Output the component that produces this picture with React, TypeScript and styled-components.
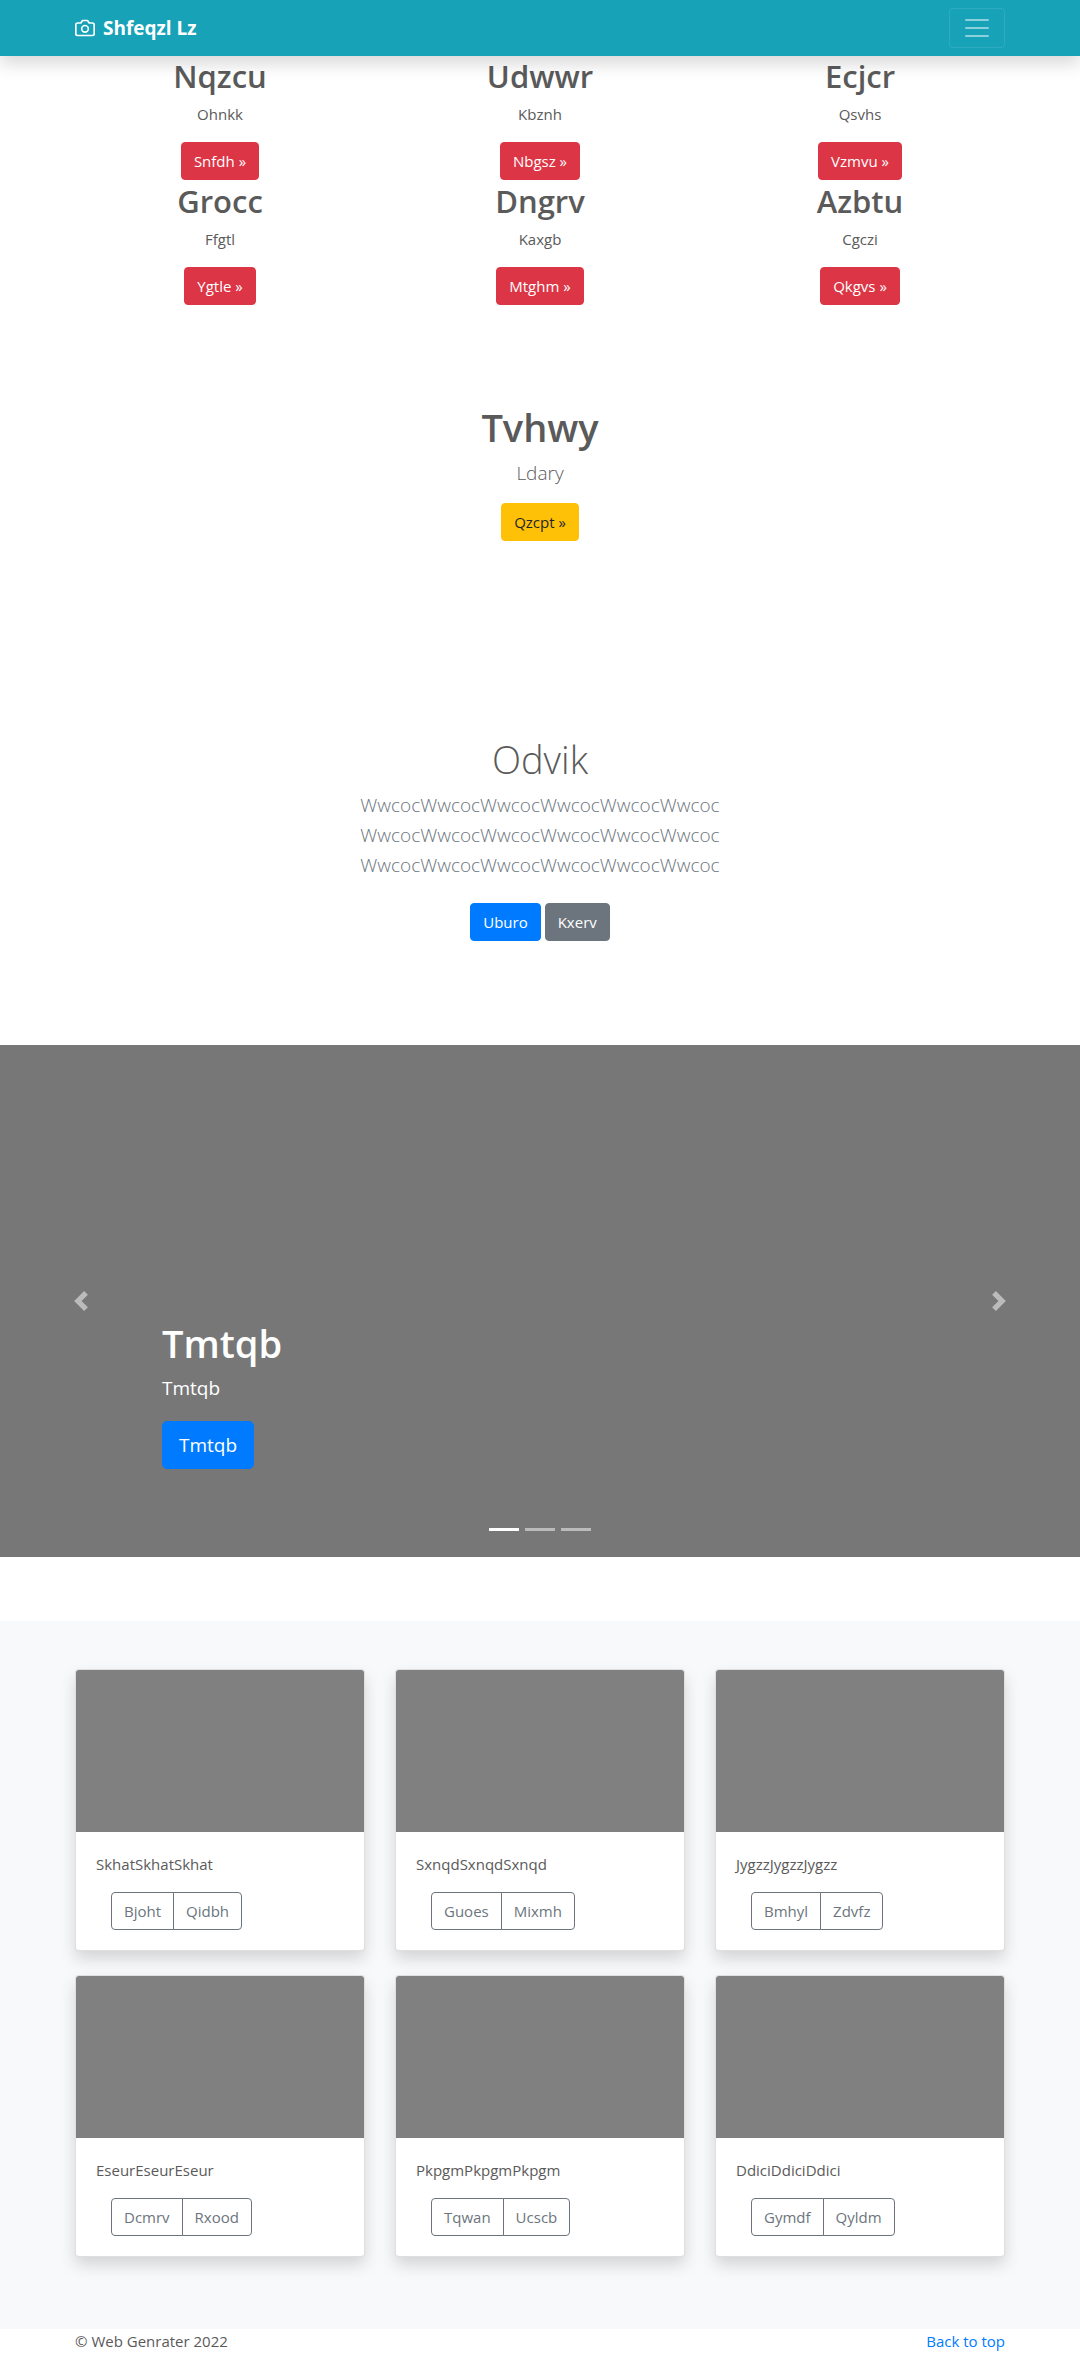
import React from 'react';
import styled, { createGlobalStyle, css } from 'styled-components';

const GlobalStyle = createGlobalStyle`
  *, *::before, *::after { box-sizing: border-box; }
  body {
    margin: 0;
    background: #fff;
    color: #5a5a5a;
    font-family: 'Segoe UI', 'Open Sans', 'Noto Sans', sans-serif;
    font-size: 15px;
    line-height: 24px;
  }
  h1, h2, p { margin: 0; padding: 0; }
`;

const Container = styled.div`
  width: 100%;
  max-width: 960px;
  margin: 0 auto;
  padding: 0 15px;
`;

/* Navbar */
const Navbar = styled.header`
  position: relative;
  z-index: 10;
  padding: 8px 0;
  background: #17a2b8;
  box-shadow: 0 8px 16px rgba(0, 0, 0, 0.15);
`;

const NavbarInner = styled(Container)`
  display: flex;
  align-items: center;
  justify-content: space-between;
`;

const Brand = styled.a`
  display: flex;
  align-items: center;
  gap: 8px;
  color: #fff;
  font-size: 19px;
  font-weight: 700;
  line-height: 30px;
  text-decoration: none;
`;

const Toggler = styled.button`
  display: flex;
  padding: 4px 12px;
  border: 1px solid rgba(255, 255, 255, 0.1);
  border-radius: 4px;
  background: transparent;
  cursor: pointer;
`;

/* Buttons */
type Tone = 'danger' | 'warning' | 'primary' | 'secondary';

const tones: Record<Tone, { bg: string; fg: string }> = {
  danger: { bg: '#dc3545', fg: '#fff' },
  warning: { bg: '#ffc107', fg: '#212529' },
  primary: { bg: '#007bff', fg: '#fff' },
  secondary: { bg: '#6c757d', fg: '#fff' },
};

const Button = styled.button<{ $tone: Tone; $large?: boolean }>`
  padding: 6px 12px;
  border: 1px solid ${({ $tone }) => tones[$tone].bg};
  border-radius: 4px;
  background: ${({ $tone }) => tones[$tone].bg};
  color: ${({ $tone }) => tones[$tone].fg};
  font-family: inherit;
  font-size: 15px;
  line-height: 24px;
  cursor: pointer;
  ${({ $large }) =>
    $large &&
    css`
      padding: 8px 16px;
      border-radius: 5px;
      font-size: 19px;
      line-height: 30px;
    `}
`;

/* Feature columns */
const FeatureGrid = styled(Container)`
  display: grid;
  grid-template-columns: repeat(3, 1fr);
  gap: 1px 30px;
`;

const Feature = styled.div`
  display: flex;
  flex-direction: column;
  align-items: center;
  text-align: center;
`;

const FeatureTitle = styled.h2`
  margin-bottom: 6px;
  font-size: 31px;
  font-weight: 600;
  line-height: 40px;
`;

const FeatureText = styled.p`
  margin-bottom: 16px;
`;

/* Centred intro blocks */
const Intro = styled.section`
  display: flex;
  flex-direction: column;
  align-items: center;
  padding: 96px 15px;
  text-align: center;
`;

const IntroTitle = styled.h1<{ $light?: boolean }>`
  margin-bottom: 5px;
  font-size: 38px;
  font-weight: ${({ $light }) => ($light ? 300 : 600)};
  line-height: 52px;
`;

const Lead = styled.p<{ $muted?: boolean }>`
  margin-bottom: 15px;
  color: ${({ $muted }) => ($muted ? '#6c757d' : 'inherit')};
  font-size: 19px;
  font-weight: 300;
  line-height: 30px;
`;

const LeadLine = styled.span`
  display: block;
`;

const ButtonRow = styled.div`
  display: flex;
  gap: 4px;
  margin: 8px 0;
`;

/* Carousel */
const Carousel = styled.section`
  position: relative;
  display: flex;
  align-items: flex-end;
  height: 512px;
  margin-bottom: 64px;
  padding: 0 15% 88px;
  background: #777;
  color: #fff;
`;

const CaptionTitle = styled(IntroTitle)`
  color: #fff;
`;

const CaptionText = styled.p`
  margin-bottom: 19px;
  font-size: 19px;
  line-height: 28px;
`;

const CarouselControl = styled.button<{ $side: 'left' | 'right' }>`
  position: absolute;
  top: 0;
  bottom: 0;
  ${({ $side }) => $side}: 0;
  display: flex;
  align-items: center;
  justify-content: center;
  width: 15%;
  padding: 0;
  border: 0;
  background: none;
  opacity: 0.5;
  cursor: pointer;
`;

const Indicators = styled.div`
  position: absolute;
  right: 0;
  bottom: 26px;
  left: 0;
  display: flex;
  justify-content: center;
  gap: 6px;
`;

const Indicator = styled.button<{ $active?: boolean }>`
  width: 30px;
  height: 3px;
  padding: 0;
  border: 0;
  background: #fff;
  opacity: ${({ $active }) => ($active ? 1 : 0.5)};
  cursor: pointer;
`;

/* Album */
const Album = styled.section`
  padding: 48px 0 72px;
  background: #f8f9fa;
`;

const CardGrid = styled(Container)`
  display: grid;
  grid-template-columns: repeat(3, 1fr);
  gap: 24px 30px;
`;

const Card = styled.article`
  overflow: hidden;
  border: 1px solid rgba(0, 0, 0, 0.125);
  border-radius: 4px;
  background: #fff;
  box-shadow: 0 8px 16px rgba(0, 0, 0, 0.15);
`;

const CardPicture = styled.div`
  height: 162px;
  background: #808080;
`;

const CardBody = styled.div`
  padding: 20px;
`;

const CardText = styled.p`
  margin-bottom: 16px;
`;

const ButtonGroup = styled.div`
  display: flex;
  padding: 0 15px;
`;

const GroupButton = styled.button`
  padding: 6px 12px;
  border: 1px solid #6c757d;
  background: transparent;
  color: #6c757d;
  font-family: inherit;
  font-size: 15px;
  line-height: 24px;
  cursor: pointer;

  &:first-child { border-radius: 4px 0 0 4px; }
  &:last-child { margin-left: -1px; border-radius: 0 4px 4px 0; }
`;

/* Footer */
const FooterInner = styled(Container)`
  display: flex;
  justify-content: space-between;
`;

const FooterLink = styled.a`
  color: #007bff;
  text-decoration: none;
`;

const features = [
  { title: 'Nqzcu', text: 'Ohnkk', action: 'Snfdh' },
  { title: 'Udwwr', text: 'Kbznh', action: 'Nbgsz' },
  { title: 'Ecjcr', text: 'Qsvhs', action: 'Vzmvu' },
  { title: 'Grocc', text: 'Ffgtl', action: 'Ygtle' },
  { title: 'Dngrv', text: 'Kaxgb', action: 'Mtghm' },
  { title: 'Azbtu', text: 'Cgczi', action: 'Qkgvs' },
];

const leadLines = [1, 2, 3].map(() => 'Wwcoc'.repeat(6));

const cards = [
  { text: 'SkhatSkhatSkhat', actions: ['Bjoht', 'Qidbh'] },
  { text: 'SxnqdSxnqdSxnqd', actions: ['Guoes', 'Mixmh'] },
  { text: 'JygzzJygzzJygzz', actions: ['Bmhyl', 'Zdvfz'] },
  { text: 'EseurEseurEseur', actions: ['Dcmrv', 'Rxood'] },
  { text: 'PkpgmPkpgmPkpgm', actions: ['Tqwan', 'Ucscb'] },
  { text: 'DdiciDdiciDdici', actions: ['Gymdf', 'Qyldm'] },
];

const CameraIcon = () => (
  <svg width="20" height="20" viewBox="0 0 24 24" fill="none" stroke="currentColor" strokeWidth="2" strokeLinecap="round" strokeLinejoin="round" aria-hidden="true">
    <path d="M23 19a2 2 0 0 1-2 2H3a2 2 0 0 1-2-2V8a2 2 0 0 1 2-2h4l2-3h6l2 3h4a2 2 0 0 1 2 2z" />
    <circle cx="12" cy="13" r="4" />
  </svg>
);

const MenuIcon = () => (
  <svg width="30" height="30" viewBox="0 0 30 30" fill="none" stroke="rgba(255, 255, 255, 0.5)" strokeWidth="2" strokeLinecap="round" aria-hidden="true">
    <path d="M4 7h22M4 15h22M4 23h22" />
  </svg>
);

const Chevron = ({ path }: { path: string }) => (
  <svg width="20" height="20" viewBox="0 0 8 8" fill="#fff" aria-hidden="true">
    <path d={path} />
  </svg>
);

export default function App() {
  return (
    <>
      <GlobalStyle />
      <Navbar id="top">
        <NavbarInner>
          <Brand href="#top">
            <CameraIcon />
            Shfeqzl Lz
          </Brand>
          <Toggler type="button" aria-label="Toggle navigation">
            <MenuIcon />
          </Toggler>
        </NavbarInner>
      </Navbar>

      <main>
        <FeatureGrid>
          {features.map((feature) => (
            <Feature key={feature.title}>
              <FeatureTitle>{feature.title}</FeatureTitle>
              <FeatureText>{feature.text}</FeatureText>
              <Button type="button" $tone="danger">{feature.action} »</Button>
            </Feature>
          ))}
        </FeatureGrid>

        <Intro>
          <IntroTitle>Tvhwy</IntroTitle>
          <Lead>Ldary</Lead>
          <Button type="button" $tone="warning">Qzcpt »</Button>
        </Intro>

        <Intro>
          <IntroTitle $light>Odvik</IntroTitle>
          <Lead $muted>
            {leadLines.map((line, index) => (
              <LeadLine key={index}>{line}</LeadLine>
            ))}
          </Lead>
          <ButtonRow>
            <Button type="button" $tone="primary">Uburo</Button>
            <Button type="button" $tone="secondary">Kxerv</Button>
          </ButtonRow>
        </Intro>

        <Carousel aria-label="Slides">
          <div>
            <CaptionTitle>Tmtqb</CaptionTitle>
            <CaptionText>Tmtqb</CaptionText>
            <Button type="button" $tone="primary" $large>Tmtqb</Button>
          </div>
          <CarouselControl type="button" $side="left" aria-label="Previous">
            <Chevron path="M5.25 0l-4 4 4 4 1.5-1.5L4.25 4l2.5-2.5L5.25 0z" />
          </CarouselControl>
          <CarouselControl type="button" $side="right" aria-label="Next">
            <Chevron path="M2.75 0l-1.5 1.5L3.75 4l-2.5 2.5L2.75 8l4-4-4-4z" />
          </CarouselControl>
          <Indicators>
            <Indicator type="button" $active aria-label="Slide 1" />
            <Indicator type="button" aria-label="Slide 2" />
            <Indicator type="button" aria-label="Slide 3" />
          </Indicators>
        </Carousel>

        <Album>
          <CardGrid>
            {cards.map((card) => (
              <Card key={card.text}>
                <CardPicture />
                <CardBody>
                  <CardText>{card.text}</CardText>
                  <ButtonGroup>
                    {card.actions.map((action) => (
                      <GroupButton type="button" key={action}>{action}</GroupButton>
                    ))}
                  </ButtonGroup>
                </CardBody>
              </Card>
            ))}
          </CardGrid>
        </Album>
      </main>

      <footer>
        <FooterInner>
          <p>© Web Genrater 2022</p>
          <FooterLink href="#top">Back to top</FooterLink>
        </FooterInner>
      </footer>
    </>
  );
}
